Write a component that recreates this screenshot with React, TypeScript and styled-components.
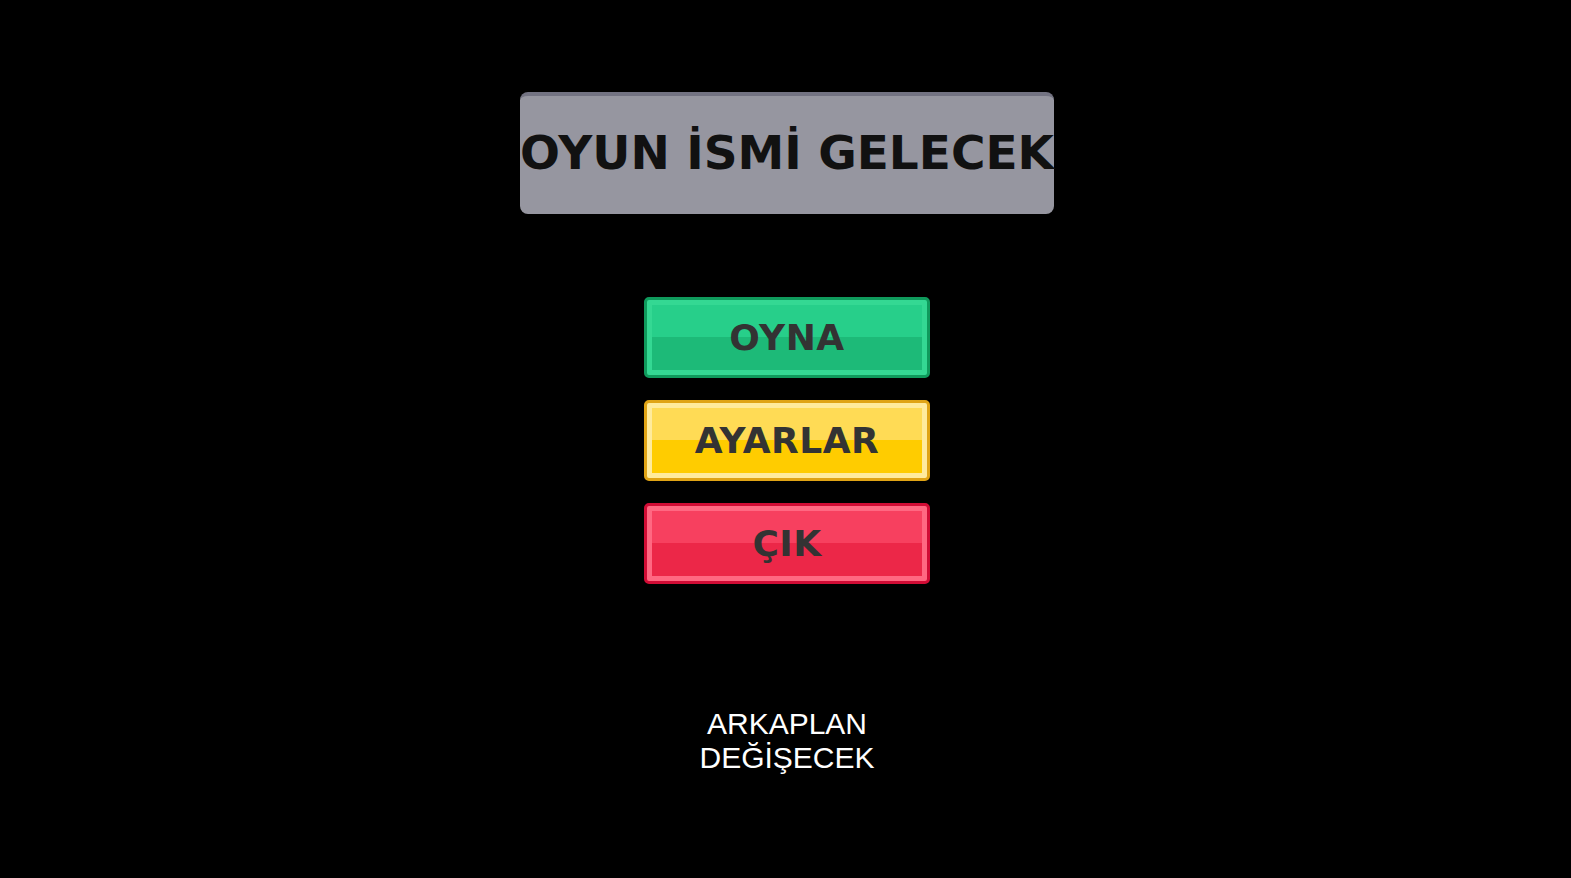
import React from "react";
import styled, { createGlobalStyle } from "styled-components";

const Global = createGlobalStyle`
  html, body { margin: 0; padding: 0; background: #000; }
  body { width: 1571px; height: 878px; overflow: hidden; }
`;

const Screen = styled.main`
  height: 878px;
  display: flex;
  flex-direction: column;
  align-items: center;
  padding: 92px 0 0 3px;
  box-sizing: border-box;
`;

const TitleBox = styled.div`
  width: 534px;
  height: 122px;
  box-sizing: border-box;
  background: #9696a0;
  border-top: 4px solid #737382;
  border-radius: 8px;
  display: flex;
  align-items: center;
  justify-content: center;
  padding-bottom: 5px;
  overflow: visible;
`;

const Title = styled.h1`
  margin: 0;
  font-family: "DejaVu Sans", sans-serif;
  font-weight: 700;
  font-size: 47px;
  letter-spacing: 0px;
  color: #111;
  white-space: nowrap;
`;

const Menu = styled.nav`
  margin-top: 83px;
  display: flex;
  flex-direction: column;
  gap: 22px;
`;

type Tone = { edge: string; rim: string; top: string; bottom: string };

const tones: Record<string, Tone> = {
  green: { edge: "#0f9a5c", rim: "#34d893", top: "#27cf8a", bottom: "#1dba78" },
  yellow: { edge: "#e0a415", rim: "#ffeb9c", top: "#ffdb55", bottom: "#ffcc00" },
  red: { edge: "#d10c35", rim: "#ff6882", top: "#f7405f", bottom: "#ec2748" },
};

const Button = styled.button<{ $tone: Tone }>`
  width: 286px;
  height: 81px;
  padding: 0;
  box-sizing: border-box;
  border: 3px solid ${(p) => p.$tone.edge};
  border-radius: 5px;
  background: ${(p) => p.$tone.edge};
  cursor: pointer;
  display: flex;
`;

const Face = styled.span<{ $tone: Tone }>`
  flex: 1;
  border: 5px solid ${(p) => p.$tone.rim};
  border-radius: 2px;
  background: linear-gradient(
    to bottom,
    ${(p) => p.$tone.top} 0%,
    ${(p) => p.$tone.top} 50%,
    ${(p) => p.$tone.bottom} 50%,
    ${(p) => p.$tone.bottom} 100%
  );
  display: flex;
  align-items: center;
  justify-content: center;
  font-family: "DejaVu Sans", sans-serif;
  font-weight: 700;
  font-size: 36px;
  letter-spacing: 0.5px;
  color: #333;
`;

const Caption = styled.p`
  margin: 123px 0 0;
  font-family: "Liberation Sans", Arial, sans-serif;
  font-size: 30px;
  line-height: 34px;
  color: #fff;
  text-align: center;
`;

export default function App() {
  return (
    <>
      <Global />
      <Screen>
        <TitleBox>
          <Title>OYUN İSMİ GELECEK</Title>
        </TitleBox>
        <Menu>
          <Button $tone={tones.green}>
            <Face $tone={tones.green}>OYNA</Face>
          </Button>
          <Button $tone={tones.yellow}>
            <Face $tone={tones.yellow}>AYARLAR</Face>
          </Button>
          <Button $tone={tones.red}>
            <Face $tone={tones.red}>ÇIK</Face>
          </Button>
        </Menu>
        <Caption>
          ARKAPLAN
          <br />
          DEĞİŞECEK
        </Caption>
      </Screen>
    </>
  );
}
